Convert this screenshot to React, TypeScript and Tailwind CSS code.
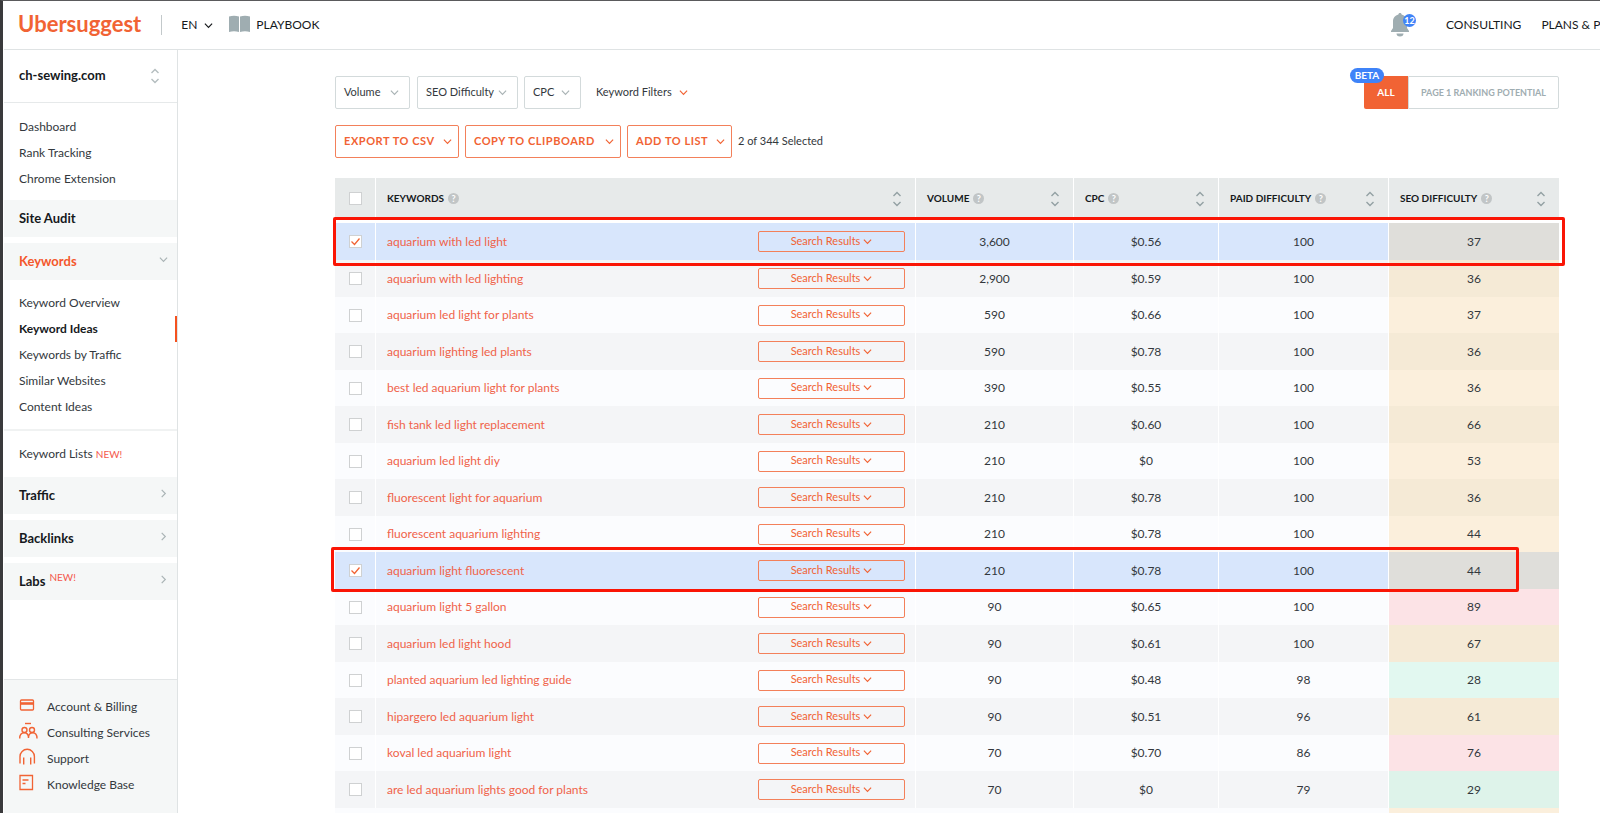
import React, { useState } from 'react';
import clsx from 'clsx';

type Difficulty = 'easy' | 'medium' | 'hard';

interface Keyword {
	term: string;
	volume: string;
	cpc: string;
	paid: number;
	seo: number;
}

const KEYWORDS: Keyword[] = [
	{ term: 'aquarium with led light', volume: '3,600', cpc: '$0.56', paid: 100, seo: 37 },
	{ term: 'aquarium with led lighting', volume: '2,900', cpc: '$0.59', paid: 100, seo: 36 },
	{ term: 'aquarium led light for plants', volume: '590', cpc: '$0.66', paid: 100, seo: 37 },
	{ term: 'aquarium lighting led plants', volume: '590', cpc: '$0.78', paid: 100, seo: 36 },
	{ term: 'best led aquarium light for plants', volume: '390', cpc: '$0.55', paid: 100, seo: 36 },
	{ term: 'fish tank led light replacement', volume: '210', cpc: '$0.60', paid: 100, seo: 66 },
	{ term: 'aquarium led light diy', volume: '210', cpc: '$0', paid: 100, seo: 53 },
	{ term: 'fluorescent light for aquarium', volume: '210', cpc: '$0.78', paid: 100, seo: 36 },
	{ term: 'fluorescent aquarium lighting', volume: '210', cpc: '$0.78', paid: 100, seo: 44 },
	{ term: 'aquarium light fluorescent', volume: '210', cpc: '$0.78', paid: 100, seo: 44 },
	{ term: 'aquarium light 5 gallon', volume: '90', cpc: '$0.65', paid: 100, seo: 89 },
	{ term: 'aquarium led light hood', volume: '90', cpc: '$0.61', paid: 100, seo: 67 },
	{ term: 'planted aquarium led lighting guide', volume: '90', cpc: '$0.48', paid: 98, seo: 28 },
	{ term: 'hipargero led aquarium light', volume: '90', cpc: '$0.51', paid: 96, seo: 61 },
	{ term: 'koval led aquarium light', volume: '70', cpc: '$0.70', paid: 86, seo: 76 },
	{ term: 'are led aquarium lights good for plants', volume: '70', cpc: '$0', paid: 79, seo: 29 },
];

const COLUMNS = ['KEYWORDS', 'VOLUME', 'CPC', 'PAID DIFFICULTY', 'SEO DIFFICULTY'];

const getDifficulty = (score: number): Difficulty => {
	if (score < 35) return 'easy';
	return score < 70 ? 'medium' : 'hard';
};

const SEO_COLORS: Record<Difficulty, [string, string]> = {
	easy: ['bg-[#e2f8f0]', 'bg-[#def3ea]'],
	medium: ['bg-[#fbefdc]', 'bg-[#f5ead6]'],
	hard: ['bg-[#fce3e6]', 'bg-[#f6dee1]'],
};

const Chevron = ({ className, dir = 'down' }: { className?: string; dir?: 'down' | 'right' }) => (
	<svg
		viewBox="0 0 10 10"
		className={clsx('size-[9px] shrink-0', className)}
		fill="none"
		stroke="currentColor"
		strokeWidth="1.3"
		aria-hidden="true"
	>
		<path d={dir === 'down' ? 'M1 3l4 4 4-4' : 'M3 1l4 4-4 4'} />
	</svg>
);

const SortArrows = ({ className }: { className?: string }) => (
	<svg
		viewBox="0 0 10 16"
		className={clsx('h-4 w-[10px] shrink-0', className)}
		fill="none"
		stroke="currentColor"
		strokeWidth="1.4"
		aria-hidden="true"
	>
		<path d="M1.500 5L5 1.500 8.500 5M1.500 11L5 14.500 8.500 11" />
	</svg>
);

const Tick = ({ label, checked, onChange }: { label: string; checked: boolean; onChange: () => void }) => (
	<label className="mx-auto grid size-[13px]">
		<input
			type="checkbox"
			aria-label={label}
			checked={checked}
			onChange={onChange}
			className="[grid-area:1/1] size-[13px] appearance-none border border-[#cfd1d2] bg-white"
		/>
		{checked && (
			<svg viewBox="0 0 13 13" className="pointer-events-none [grid-area:1/1] size-[13px]" fill="none" stroke="#f16334" strokeWidth="1.3">
				<path d="M2.500 6.500l3 3 5-6" />
			</svg>
		)}
	</label>
);

const NavLinks = ({ items, active }: { items: string[]; active?: string }) => (
	<ul>
		{items.map((item) => (
			<li key={item} className={clsx('h-[26px] border-r-2 pl-[15px] leading-[26px]', item === active ? 'border-[#f4511e]' : 'border-transparent')}>
				<a href="#" className={item === active ? 'font-bold text-[#16191c]' : ''}>
					{item}
				</a>
			</li>
		))}
	</ul>
);

const Section = ({ title, arrow, isNew, active }: { title: string; arrow?: 'down' | 'right'; isNew?: boolean; active?: boolean }) => (
	<button
		type="button"
		className={clsx(
			'flex h-[37px] w-full shrink-0 items-center bg-[#f5f7f7] pl-[15px] pr-[9px] text-[13px] font-bold',
			active ? 'text-[#f4582c]' : 'text-[#16191c]',
		)}
	>
		{title}
		{isNew && <span className="mb-2 ml-1 text-[10px] font-normal text-[#f4584c]">NEW!</span>}
		{arrow && <Chevron dir={arrow} className="mb-1 ml-auto text-[#a9b3b5]" />}
	</button>
);

const CardIcon = () => (
	<svg viewBox="0 0 19 18" className="h-[18px] w-[19px]" fill="none" stroke="#f16334" strokeWidth="1.300">
		<rect x="1.500" y="4" width="13" height="10" rx="1" />
		<path d="M1.500 7.500h13" strokeWidth="2.600" />
	</svg>
);

const PeopleIcon = () => (
	<svg viewBox="0 0 19 18" className="h-[18px] w-[19px]" fill="none" stroke="#f16334" strokeWidth="1.400">
		<path d="M6 1.500h6" />
		<circle cx="5.500" cy="8" r="2.500" />
		<circle cx="13" cy="8" r="2.500" />
		<path d="M.7 16.500c0-3.500 1.800-5.800 4.600-5.800s4.200 2 4.200 5.300c0-3.300 1.400-5.300 4.200-5.300s4.300 2.300 4.300 5.800" />
	</svg>
);

const HeadsetIcon = () => (
	<svg viewBox="0 0 19 18" className="h-[18px] w-[19px]" fill="none" stroke="#f16334" strokeWidth="1.400">
		<path d="M1 15.500V8.500a7.200 7.200 0 0 1 14.400 0v7M4.700 9.500v7M11.700 9.500v7" />
	</svg>
);

const BookIcon = () => (
	<svg viewBox="0 0 19 18" className="h-[18px] w-[19px]" fill="none" stroke="#f16334" strokeWidth="1.300">
		<path d="M1 1.500h12.500v14H1zM3.500 6h6M3.500 9.500h3" />
	</svg>
);

const FOOTER_LINKS = [
	{ label: 'Account & Billing', Icon: CardIcon },
	{ label: 'Consulting Services', Icon: PeopleIcon },
	{ label: 'Support', Icon: HeadsetIcon },
	{ label: 'Knowledge Base', Icon: BookIcon },
];

const TopBar = () => (
	<header className="flex h-[49px] shrink-0 items-center border-b border-[#dfe3e4] pl-[14px] text-[#16191c]">
		<a href="#" className="pb-[3px] text-[22px] font-bold leading-none text-[#f16334]">
			Ubersuggest
		</a>
		<span className="ml-5 h-5 w-px bg-[#c3c9cb]" />
		<button type="button" className="ml-[19px] flex items-center gap-[7px]">
			EN
			<Chevron />
		</button>
		<a href="#" className="ml-4 flex items-center gap-[6px]">
			<svg viewBox="0 0 21 18" className="mb-[2px] h-[18px] w-[21px]" fill="#9fadb1">
				<path d="M0 1.500Q5 0 10 1.500V17Q5 15.500 0 17zM11 1.500Q16 0 21 1.500V17Q16 15.500 11 17z" />
			</svg>
			PLAYBOOK
		</a>
		<nav className="ml-auto flex w-[209px] shrink-0 items-center whitespace-nowrap">
			<button type="button" aria-label="Notifications" className="relative mr-[37px] h-6 w-[18px] shrink-0">
				<svg viewBox="0 0 18 24" className="h-6 w-[18px]" fill="#9fadb1">
					<path d="M9 0c1 0 1.600.6 1.600 1.500C14 2.300 16 5 16 8.500V15l2 3v1H0v-1l2-3V8.500C2 5 4 2.300 7.400 1.500 7.400.6 8 0 9 0zM5.500 20.500h7a3.500 3 0 0 1-7 0z" />
				</svg>
				<span className="absolute -right-[7px] top-px grid size-[13px] place-items-center rounded-full bg-[#3f83f8] text-[9px] font-bold leading-none text-white">
					12
				</span>
			</button>
			<a href="#" className="mr-5">CONSULTING</a>
			<a href="#">PLANS &amp; PRICING</a>
		</nav>
	</header>
);

const Sidebar = () => (
	<aside className="flex w-[174px] shrink-0 flex-col border-r border-[#dfe3e4]">
		<button type="button" className="flex h-[53px] shrink-0 items-center justify-between border-b border-[#e6e9ea] pl-[15px] pr-[17px] text-[13px] font-bold text-[#16191c]">
			ch-sewing.com
			<SortArrows className="text-[#b4bdbf]" />
		</button>
		<div className="pb-[8px] pt-[11px]">
			<NavLinks items={['Dashboard', 'Rank Tracking', 'Chrome Extension']} />
		</div>
		<div className="flex flex-col gap-[6px]">
			<Section title="Site Audit" />
			<Section title="Keywords" arrow="down" active />
		</div>
		<div className="border-b-2 border-[#f0f2f2] pb-[9px] pt-[10px]">
			<NavLinks
				active="Keyword Ideas"
				items={['Keyword Overview', 'Keyword Ideas', 'Keywords by Traffic', 'Similar Websites', 'Content Ideas']}
			/>
		</div>
		<div className="py-[10px] pl-[15px] leading-[26px]">
			<a href="#">
				Keyword Lists <span className="text-[10px] text-[#f4584c]">NEW!</span>
			</a>
		</div>
		<div className="flex flex-col gap-[6px]">
			<Section title="Traffic" arrow="right" />
			<Section title="Backlinks" arrow="right" />
			<Section title="Labs" arrow="right" isNew />
		</div>
		<ul className="mt-auto border-t border-[#e3e6e7] bg-[#f5f7f7] pb-[15px] pl-[15px] pt-[14px]">
			{FOOTER_LINKS.map(({ label, Icon }) => (
				<li key={label}>
					<a href="#" className="flex h-[26px] items-center gap-[9px]">
						<span className="mb-1">
							<Icon />
						</span>
						{label}
					</a>
				</li>
			))}
		</ul>
	</aside>
);

const Toolbar = ({ selected }: { selected: number }) => {
	const filter = 'flex h-[33px] items-center justify-between whitespace-nowrap rounded-xs border border-[#d3dadb] pl-2 pr-[10px]';
	const action =
		'flex h-[33px] items-center justify-between whitespace-nowrap rounded-xs border border-[#f3805a] pl-2 pr-[6px] font-bold tracking-wider text-[#f16334]';

	return (
		<div className="text-[11px]">
			<div className="flex items-center justify-between">
				<div className="flex items-center">
					<button type="button" className={clsx(filter, 'mr-[7px] w-[75px]')}>
						Volume <Chevron className="text-[#a9b3b5]" />
					</button>
					<button type="button" className={clsx(filter, 'mr-[6px] w-[101px]')}>
						SEO Difficulty <Chevron className="text-[#a9b3b5]" />
					</button>
					<button type="button" className={clsx(filter, 'mr-[15px] w-[57px]')}>
						CPC <Chevron className="text-[#a9b3b5]" />
					</button>
					<button type="button" className="flex items-center gap-[7px]">
						Keyword Filters <Chevron className="text-[#f16334]" />
					</button>
				</div>
				<div className="relative flex h-[33px] text-[10px] font-bold">
					<button type="button" className="w-11 rounded-l-xs bg-[#f16334] text-white">
						ALL
					</button>
					<button type="button" className="w-[151px] rounded-r-xs border border-[#d3dadb] text-[9px] text-[#9fadb1]">
						PAGE 1 RANKING POTENTIAL
					</button>
					<span className="absolute -left-[14px] -top-2 h-[15px] w-[34px] rounded-full bg-[#3f83f8] text-center leading-[15px] text-white">
						BETA
					</span>
				</div>
			</div>
			<div className="mt-4 flex items-center">
				<button type="button" className={clsx(action, 'mr-[6px] w-[124px]')}>
					EXPORT TO CSV <Chevron />
				</button>
				<button type="button" className={clsx(action, 'mr-[6px] w-[156px]')}>
					COPY TO CLIPBOARD <Chevron />
				</button>
				<button type="button" className={clsx(action, 'mr-[6px] w-[105px]')}>
					ADD TO LIST <Chevron />
				</button>
				<span>{selected} of 344 Selected</span>
			</div>
		</div>
	);
};

const KeywordTable = ({ selected, onToggle }: { selected: number[]; onToggle: (index: number) => void }) => (
	<div className="relative mt-5">
		<table className="w-full table-fixed border-separate border-spacing-0">
			<colgroup>
				<col className="w-[41px]" />
				<col />
				<col className="w-[158px]" />
				<col className="w-[145px]" />
				<col className="w-[170px]" />
				<col className="w-[170px]" />
			</colgroup>
			<thead>
				<tr className="h-[45px] text-[10px] text-[#16191c]">
					<th className="border-b-4 border-r border-white bg-[#e7eaea] p-0">
						<Tick label="Select all keywords" checked={false} onChange={() => {}} />
					</th>
					{COLUMNS.map((column) => (
						<th key={column} className="border-b-4 border-r border-white bg-[#e7eaea] py-0 pl-[11px] pr-[13px] last:border-r-0">
							<div className="flex items-center">
								{column}
								<span className="ml-1 grid size-[11px] place-items-center rounded-full bg-[#c1c5c6] text-[9px] leading-none text-white">?</span>
								<SortArrows className="ml-auto text-[#93a0a3]" />
							</div>
						</th>
					))}
				</tr>
			</thead>
			<tbody>
				{KEYWORDS.map(({ term, volume, cpc, paid, seo }, index) => {
					const isSelected = selected.includes(index);
					const odd = index % 2;
					const cell = 'border-r border-white p-0 text-center';

					return (
						<tr
							key={term}
							className={clsx(
								odd || isSelected ? 'h-[37px]' : 'h-9',
								isSelected ? 'bg-[#d8e6fc]' : odd ? 'bg-[#f4f5f7]' : 'bg-[#fbfcfe]',
							)}
						>
							<td className="border-r border-white p-0">
								<Tick label={`Select ${term}`} checked={isSelected} onChange={() => onToggle(index)} />
							</td>
							<td className="border-r border-white py-0 pl-[11px] pr-[10px] text-[#f0634a]">
								<div className="flex items-center justify-between">
									<a href="#">{term}</a>
									<button
										type="button"
										className="flex h-[21px] w-[147px] items-center justify-center gap-[3px] rounded-xs border border-[#f3805a] pb-px text-[11px] text-[#f16334]"
									>
										Search Results <Chevron />
									</button>
								</div>
							</td>
							<td className={cell}>{volume}</td>
							<td className={cell}>{cpc}</td>
							<td className={cell}>{paid}</td>
							<td className={clsx('p-0 text-center', isSelected ? 'bg-[#dfdeda]' : SEO_COLORS[getDifficulty(seo)][odd])}>{seo}</td>
						</tr>
					);
				})}
				<tr className="h-9 bg-[#fbfcfe]">
					<td colSpan={5} />
					<td className="bg-[#fbefdc]" />
				</tr>
			</tbody>
		</table>
		{/* marker frames around the two picked keywords */}
		<div className="pointer-events-none absolute -left-[2px] -right-[6px] top-[39px] h-[49px] rounded-xs border-3 border-[#fa1505]" />
		<div className="pointer-events-none absolute -left-1 right-10 top-[369px] h-[45px] rounded-xs border-3 border-[#fa1505]" />
	</div>
);

const App = () => {
	const [selected, setSelected] = useState<number[]>([0, 9]);

	const handleToggle = (index: number) => {
		setSelected((prev) => (prev.includes(index) ? prev.filter((i) => i !== index) : [...prev, index]));
	};

	return (
		<div className="flex h-screen flex-col overflow-hidden border-l-3 border-t border-l-[#3a3a3c] border-t-[#5a5a5c] bg-white pl-px font-['Lato',sans-serif] text-[12px] text-[#33383d]">
			<TopBar />
			<div className="flex min-h-0 flex-1">
				<Sidebar />
				<main className="min-w-0 flex-1 overflow-hidden pl-[157px] pr-[41px] pt-[26px]">
					<Toolbar selected={selected.length} />
					<KeywordTable selected={selected} onToggle={handleToggle} />
				</main>
			</div>
		</div>
	);
};

export default App;
